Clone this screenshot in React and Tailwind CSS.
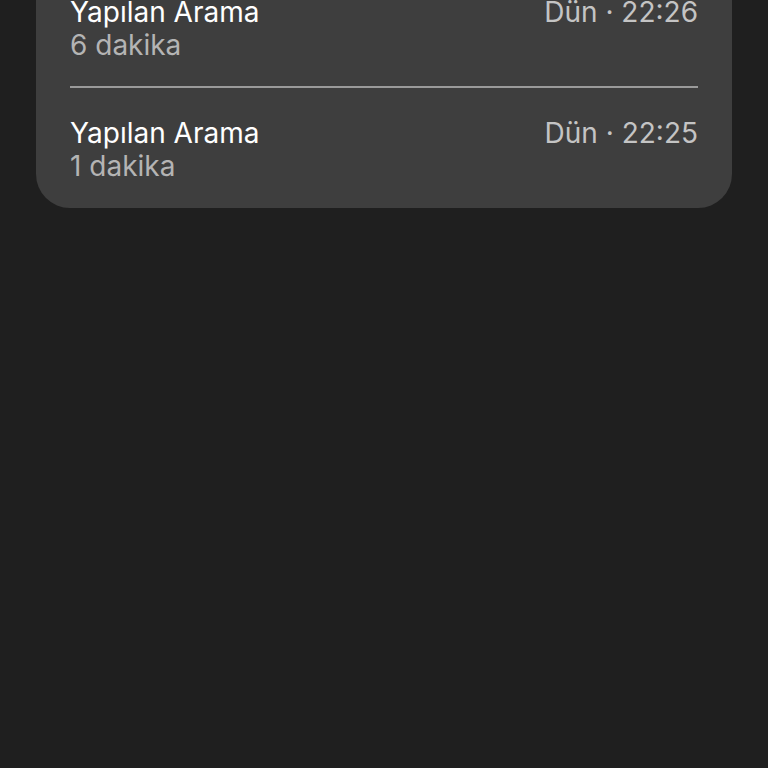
import React from 'react';

const calls = [
    { title: 'Yapılan Arama', duration: '6 dakika', time: 'Dün · 22:26' },
    { title: 'Yapılan Arama', duration: '1 dakika', time: 'Dün · 22:25' },
];

const CallRow = ({ call, last }) => (
    <div className={`flex justify-between items-start pt-[29px] ${last ? 'pb-[25px]' : 'pb-[24px]'}`}>
        <div className="flex flex-col">
            <span className="text-white">{call.title}</span>
            <span className="text-[#b4b4b4]">{call.duration}</span>
        </div>
        <span className="text-[#c4c4c4]">{call.time}</span>
    </div>
);

export default function App() {
    return (
        <div
            className="w-[768px] h-[768px] bg-[#1f1f1f] overflow-hidden"
            style={{ fontFamily: 'Inter, "Noto Sans", sans-serif' }}
        >
            <div className="mx-[36px] mt-[-33px] bg-[#3e3e3e] rounded-b-[34px] px-[34px] text-[28px] leading-[33px]">
                {calls.map((call, index) => (
                    <div key={index}>
                        {index > 0 && <div className="h-[2px] bg-[#9a9a9a]"></div>}
                        <CallRow call={call} last={index === calls.length - 1} />
                    </div>
                ))}
            </div>
        </div>
    );
}
